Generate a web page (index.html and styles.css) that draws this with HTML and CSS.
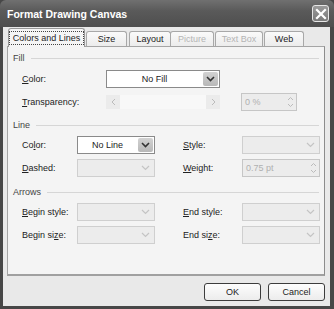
FILE: index.html
```html
<!DOCTYPE html>
<html lang="en">
<head>
    <meta charset="UTF-8">
    <title>Format Drawing Canvas</title>
    <link rel="stylesheet" href="styles.css">
</head>
<body>
    <div class="window">
        <div class="titlebar">
            <span class="title">Format Drawing Canvas</span>
            <span class="close">
                <svg width="12" height="12" viewBox="0 0 12 12"><path d="M2 2 L10 10 M10 2 L2 10" stroke="#fff" stroke-width="2.2" stroke-linecap="square"/></svg>
            </span>
        </div>
        <div class="body">
            <ul class="tabs">
                <li class="tab active"><span class="focus">Colors and Lines</span></li>
                <li class="tab t-size">Size</li>
                <li class="tab t-layout">Layout</li>
                <li class="tab t-pic off">Picture</li>
                <li class="tab t-text off">Text Box</li>
                <li class="tab t-web">Web</li>
            </ul>
            <div class="panel">
                <div class="heading"><span>Fill</span><i></i></div>
                <div class="fill-grid">
                    <label><u>C</u>olor:</label>
                    <div class="combo on"><span class="val">No Fill</span><span class="drop"><svg width="9" height="6" viewBox="0 0 9 6"><path d="M1 1 L4.5 4.5 L8 1" fill="none" stroke="#333" stroke-width="1.6"/></svg></span></div>
                    <span></span><span></span>

                    <label><u>T</u>ransparency:</label>
                    <div class="slider">
                        <span class="sbtn"><svg width="5" height="8" viewBox="0 0 5 8"><path d="M4 1 L1 4 L4 7" fill="none" stroke="#bbb"/></svg></span>
                        <span class="track"></span>
                        <span class="sbtn"><svg width="5" height="8" viewBox="0 0 5 8"><path d="M1 1 L4 4 L1 7" fill="none" stroke="#bbb"/></svg></span>
                    </div>
                    <span></span>
                    <div class="spin"><span class="val">0 %</span><span class="arrows"><svg width="7" height="12" viewBox="0 0 7 12"><path d="M1 4 L3.5 1.5 L6 4 M1 8 L3.5 10.5 L6 8" fill="none" stroke="#bbb"/></svg></span></div>
                </div>

                <div class="heading sec"><span>Line</span><i></i></div>
                <div class="pair-grid">
                    <label>Co<u>l</u>or:</label>
                    <div class="combo on"><span class="val">No Line</span><span class="drop"><svg width="9" height="6" viewBox="0 0 9 6"><path d="M1 1 L4.5 4.5 L8 1" fill="none" stroke="#333" stroke-width="1.6"/></svg></span></div>
                    <span></span>
                    <label><u>S</u>tyle:</label>
                    <div class="combo"><span class="val"></span><span class="drop"><svg width="9" height="6" viewBox="0 0 9 6"><path d="M1 1 L4.5 4.5 L8 1" fill="none" stroke="#c4c4c4" stroke-width="1.2"/></svg></span></div>

                    <label><u>D</u>ashed:</label>
                    <div class="combo"><span class="val"></span><span class="drop"><svg width="9" height="6" viewBox="0 0 9 6"><path d="M1 1 L4.5 4.5 L8 1" fill="none" stroke="#c4c4c4" stroke-width="1.2"/></svg></span></div>
                    <span></span>
                    <label><u>W</u>eight:</label>
                    <div class="spin"><span class="val">0.75 pt</span><span class="arrows"><svg width="7" height="12" viewBox="0 0 7 12"><path d="M1 4 L3.5 1.5 L6 4 M1 8 L3.5 10.5 L6 8" fill="none" stroke="#bbb"/></svg></span></div>
                </div>

                <div class="heading sec2"><span>Arrows</span><i></i></div>
                <div class="pair-grid">
                    <label><u>B</u>egin style:</label>
                    <div class="combo"><span class="val"></span><span class="drop"><svg width="9" height="6" viewBox="0 0 9 6"><path d="M1 1 L4.5 4.5 L8 1" fill="none" stroke="#c4c4c4" stroke-width="1.2"/></svg></span></div>
                    <span></span>
                    <label><u>E</u>nd style:</label>
                    <div class="combo"><span class="val"></span><span class="drop"><svg width="9" height="6" viewBox="0 0 9 6"><path d="M1 1 L4.5 4.5 L8 1" fill="none" stroke="#c4c4c4" stroke-width="1.2"/></svg></span></div>

                    <label>Begin si<u>z</u>e:</label>
                    <div class="combo"><span class="val"></span><span class="drop"><svg width="9" height="6" viewBox="0 0 9 6"><path d="M1 1 L4.5 4.5 L8 1" fill="none" stroke="#c4c4c4" stroke-width="1.2"/></svg></span></div>
                    <span></span>
                    <label>End si<u>z</u>e:</label>
                    <div class="combo"><span class="val"></span><span class="drop"><svg width="9" height="6" viewBox="0 0 9 6"><path d="M1 1 L4.5 4.5 L8 1" fill="none" stroke="#c4c4c4" stroke-width="1.2"/></svg></span></div>
                </div>
            </div>
            <div class="buttons">
                <button class="btn">OK</button>
                <button class="btn">Cancel</button>
            </div>
        </div>
    </div>
</body>
</html>
```

FILE: styles.css
```css
* {
    margin: 0;
    padding: 0;
    box-sizing: border-box;
}

body {
    background: #fff;
    font-family: "Liberation Sans", Arial, sans-serif;
    font-size: 9px;
    color: #222;
}

li {
    list-style: none;
}

u {
    text-decoration: underline;
}

.window {
    width: 334px;
    height: 309px;
    background: #474747;
    padding: 0 4px 3px 3px;
    display: flex;
    flex-direction: column;
}

.titlebar {
    height: 27px;
    margin: 0 -4px 0 -3px;
    padding: 0 5px 0 7px;
    background: linear-gradient(#707070, #5a5a5a 40%, #4e4e4e);
    border-radius: 6px 6px 0 0;
    display: flex;
    align-items: center;
    justify-content: space-between;
}

.title {
    color: #fff;
    font-weight: bold;
    font-size: 10.5px;
}

.close {
    width: 17px;
    height: 17px;
    border: 1px solid #e6e6e6;
    border-radius: 3px;
    background: linear-gradient(#9a9a9a, #7a7a7a);
    display: flex;
    align-items: center;
    justify-content: center;
}

.body {
    flex: 1;
    background: #e9e9e9;
    padding: 1px 5px 0 4px;
    display: flex;
    flex-direction: column;
}

.tabs {
    display: flex;
    height: 18px;
    padding-left: 2px;
    align-items: flex-end;
    white-space: nowrap;
}

.tab {
    height: 15px;
    border: 1px solid #a8a8a8;
    border-bottom: none;
    border-radius: 3px 3px 0 0;
    background: linear-gradient(#fafafa, #ececec);
    display: flex;
    align-items: center;
    justify-content: center;
    margin-left: -1px;
}

.tab.active {
    width: 77px;
    background: #f5f5f5;
    border-color: #999;
    position: relative;
    z-index: 1;
    margin-bottom: -1px;
    height: 19px;
    padding-bottom: 1px;
}

.focus {
    border: 1px dotted #444;
    padding: 0 3px;
    line-height: 12px;
}

.t-size { width: 41px; margin-left: 1px; }
.t-layout { width: 42px; margin-left: 2px; }
.t-pic { width: 44px; }
.t-text { width: 48px; margin-left: 1px; }
.t-web { width: 40px; margin-left: 1px; }

.tab.off {
    color: #b4b4b4;
}

.panel {
    height: 230px;
    background: #f4f4f4;
    border: 1px solid #a5a5a5;
    border-right-color: #8c8c8c;
    border-bottom: 2px solid #a0a0a0;
    padding: 4px 5px 0 5px;
}

.heading {
    display: flex;
    align-items: center;
    height: 14px;
    color: #444;
}

.heading i {
    flex: 1;
    height: 1px;
    background: #d6d6d6;
    margin-left: 6px;
    margin-top: 1px;
}

.heading.sec {
    margin-top: 7px;
}

.heading.sec2 {
    margin-top: 8px;
}

label {
    padding-left: 9px;
    white-space: nowrap;
}

.fill-grid {
    display: grid;
    grid-template-columns: 93px 114px 21px 56px;
    grid-auto-rows: 18px;
    row-gap: 5px;
    align-items: center;
    margin-top: 5px;
}

.pair-grid {
    display: grid;
    grid-template-columns: 64px 78px 19px 68px 78px;
    grid-auto-rows: 18px;
    row-gap: 5px;
    align-items: center;
    margin-top: 4px;
}

.combo {
    height: 18px;
    border: 1px solid #cfcfcf;
    background: #ececec;
    display: flex;
}

.combo.on {
    border-color: #8a8a8a;
    background: #fff;
}

.combo .val {
    flex: 1;
    text-align: center;
    line-height: 16px;
}

.drop {
    width: 15px;
    margin: 1px;
    display: flex;
    align-items: center;
    justify-content: center;
    background: #ececec;
}

.combo.on .drop {
    background: linear-gradient(#d2d2d2, #b8b8b8);
    border-radius: 2px;
}

.slider {
    height: 14px;
    display: flex;
    background: #f8f8f8;
}

.sbtn {
    width: 14px;
    background: #ebebeb;
    display: flex;
    align-items: center;
    justify-content: center;
}

.track {
    flex: 1;
}

.spin {
    height: 18px;
    border: 1px solid #c6c6c6;
    background: #ececec;
    display: flex;
    color: #b0b0b0;
}

.spin .val {
    flex: 1;
    padding-left: 3px;
    line-height: 16px;
}

.arrows {
    width: 12px;
    display: flex;
    align-items: center;
    justify-content: center;
}

.buttons {
    display: flex;
    justify-content: flex-end;
    gap: 7px;
    margin-top: 7px;
}

.btn {
    width: 57px;
    height: 18px;
    font-family: "Liberation Sans", Arial, sans-serif;
    font-size: 9px;
    color: #222;
    background: linear-gradient(#fdfdfd, #ececec);
    border: 1px solid #3c3c3c;
    border-radius: 3px;
}
```
